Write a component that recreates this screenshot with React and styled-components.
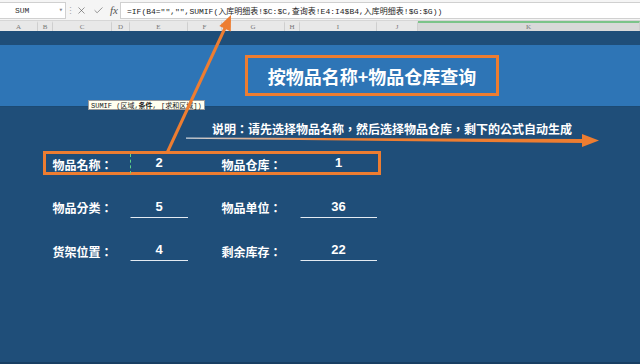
import React from 'react';
import styled, { createGlobalStyle } from 'styled-components';
import { X, Check } from 'lucide-react';

const GlobalStyle = createGlobalStyle`
    html, body { margin: 0; padding: 0; background: #1f4e79; }
    body { font-family: "Noto Sans CJK SC", "Noto Sans", sans-serif; }
`

const ORANGE = '#ed7d31';
const CJK = '"Noto Sans CJK SC", "Noto Sans", sans-serif';
// TC variant centres the full-width colon and comma, as in the sheet
const CJK_CENTERED = '"Noto Sans CJK TC", "Noto Sans CJK SC", sans-serif';
const MONO = '"Liberation Mono", "Noto Sans CJK SC", monospace';

const columns = [
    ['A', 38], ['B', 15], ['C', 59], ['D', 18], ['E', 58], ['F', 34],
    ['G', 63], ['H', 15], ['I', 77], ['J', 41], ['K', 222],
];

const rows = [
    { highlight: true, a: '物品名称：', av: '2', b: '物品仓库：', bv: '1' },
    { a: '物品分类：', av: '5', b: '物品单位：', bv: '36' },
    { a: '货架位置：', av: '4', b: '剩余库存：', bv: '22' },
];

function App() {
    return (
        <Page>
            <GlobalStyle />
            <FormulaBar>
                <NameBox>
                    <span>SUM</span>
                    <Caret>▾</Caret>
                </NameBox>
                <Grip>⋮</Grip>
                <BarIcons>
                    <X size={11} strokeWidth={1.3} color="#555" />
                    <Check size={11} strokeWidth={1.3} color="#555" />
                    <Fx>fx</Fx>
                </BarIcons>
                <FormulaInput>=IF(B4="","",SUMIF(入库明细表!$C:$C,查询表!E4:I4$B4,入库明细表!$G:$G))</FormulaInput>
            </FormulaBar>

            <ColumnHeader>
                {columns.map(([name, w]) => (
                    <ColCell key={name} width={w} selected={name === 'K'}>{name}</ColCell>
                ))}
            </ColumnHeader>

            <TopStrip />

            <Banner>
                <TitleBox>按物品名称+物品仓库查询</TitleBox>
            </Banner>

            <Sheet>
                <Note>说明：请先选择物品名称，然后选择物品仓库，剩下的公式自动生成</Note>
                <Rows>
                    {rows.map((r, i) => (
                        <Row key={i} highlight={r.highlight}>
                            <span />
                            <Label>{r.a}</Label>
                            <span />
                            <Value underline={!r.highlight} active={r.highlight}>{r.av}</Value>
                            <span />
                            <Label>{r.b}</Label>
                            <span />
                            <Value underline={!r.highlight}>{r.bv}</Value>
                        </Row>
                    ))}
                </Rows>
            </Sheet>

            <Tooltip>SUMIF (区域, <b>条件</b>, [求和区域])</Tooltip>

            <Arrows width="640" height="364" viewBox="0 0 640 364">
                <defs>
                    <linearGradient id="fade" x1="186" y1="0" x2="600" y2="0" gradientUnits="userSpaceOnUse">
                        <stop offset="0" stopColor="#cfd6de" />
                        <stop offset="0.35" stopColor={ORANGE} />
                        <stop offset="1" stopColor={ORANGE} />
                    </linearGradient>
                </defs>
                <line x1="167" y1="153" x2="225" y2="28" stroke={ORANGE} strokeWidth="3" />
                <polygon points="231,15 230.8,31.5 219.4,26" fill={ORANGE} />
                <polygon points="186,137.5 584,139 584,143 186,138.7" fill="url(#fade)" />
                <polygon points="599,140.5 582,134 582,147" fill={ORANGE} />
            </Arrows>
        </Page>
    );
}

export default App;

const Page = styled.div`
    position: relative;
    width: 640px;
    height: 364px;
    overflow: hidden;
    display: flex;
    flex-direction: column;
    background: #1f4e79;
`

const FormulaBar = styled.div`
    height: 21px;
    display: flex;
    align-items: center;
    background: #f5f5f5;
    border-bottom: 1px solid #d6d6d6;
    box-sizing: border-box;
`

const NameBox = styled.div`
    width: 66px;
    height: 17px;
    box-sizing: border-box;
    background: #ffffff;
    border: 1px solid #d0d0d0;
    border-left: none;
    display: flex;
    align-items: center;
    justify-content: space-between;
    padding: 0 2px 0 15px;
    font-family: ${MONO};
    font-size: 8px;
    color: #333;
`

const Caret = styled.span`
    font-size: 7px;
    color: #888;
`

const Grip = styled.span`
    width: 8px;
    text-align: center;
    font-size: 9px;
    color: #aaa;
`

const BarIcons = styled.div`
    display: flex;
    align-items: center;
    gap: 6px;
    padding-left: 2px;
    width: 44px;
`

const Fx = styled.span`
    font-family: "Liberation Serif", serif;
    font-style: italic;
    font-size: 11px;
    color: #555;
`

const FormulaInput = styled.div`
    flex: 1;
    height: 17px;
    box-sizing: border-box;
    background: #ffffff;
    border: 1px solid #d0d0d0;
    border-right: none;
    padding-left: 6px;
    display: flex;
    align-items: center;
    white-space: nowrap;
    font-family: ${MONO};
    font-size: 8px;
    color: #222;
`

const ColumnHeader = styled.div`
    height: 10px;
    display: flex;
    background: #e8e8e8;
`

const ColCell = styled.div`
    width: ${p => p.width}px;
    flex: none;
    box-sizing: border-box;
    border-right: 1px solid #cfcfcf;
    border-top: 2px solid ${p => (p.selected ? '#7cc48a' : 'transparent')};
    background: ${p => (p.selected ? '#d9d9d9' : 'transparent')};
    font-family: "Liberation Serif", serif;
    font-size: 7px;
    line-height: 8px;
    color: #777;
    text-align: center;
`

const TopStrip = styled.div`
    height: 14px;
    background: #1f4e79;
`

const Banner = styled.div`
    height: 62px;
    background: #2e75b6;
    border-bottom: 1px solid #1c4a73;
    box-sizing: border-box;
    display: flex;
    align-items: center;
    padding-left: 245px;
`

const TitleBox = styled.div`
    width: 254px;
    height: 41px;
    box-sizing: border-box;
    border: 3.5px solid ${ORANGE};
    display: flex;
    align-items: center;
    justify-content: center;
    font-family: ${CJK};
    font-weight: 700;
    font-size: 18px;
    color: #ffffff;
`

const Sheet = styled.div`
    flex: 1;
    background: #1f4e79;
    border-bottom: 2px solid #183f63;
    padding-top: 14px;
`

const Note = styled.div`
    padding-left: 212px;
    height: 16px;
    line-height: 16px;
    font-family: ${CJK_CENTERED};
    font-weight: 700;
    font-size: 12px;
    color: #ffffff;
    white-space: nowrap;
`

const Rows = styled.div`
    margin-top: 14px;
    display: flex;
    flex-direction: column;
    gap: 19.5px;
`

const Row = styled.div`
    margin-left: 43px;
    width: 338px;
    height: 24px;
    box-sizing: border-box;
    border: 3.5px solid ${p => (p.highlight ? ORANGE : 'transparent')};
    display: grid;
    grid-template-columns: 6.5px 59px 18px 58px 34px 63px 15px 77px;
    align-items: center;
`

const Label = styled.div`
    font-family: ${CJK_CENTERED};
    font-weight: 700;
    font-size: 12px;
    color: #ffffff;
    white-space: nowrap;
`

const Value = styled.div`
    height: 20px;
    box-sizing: border-box;
    line-height: 18px;
    text-align: center;
    font-family: "Liberation Sans", "Noto Sans", sans-serif;
    font-weight: 700;
    font-size: 13px;
    color: #ffffff;
    border-bottom: 1.5px solid ${p => (p.underline ? '#e4ebf2' : 'transparent')};
    border-left: 1px dashed ${p => (p.active ? '#5fd38a' : 'transparent')};
`

const Tooltip = styled.div`
    position: absolute;
    left: 88px;
    top: 100px;
    height: 10px;
    padding: 0 2px;
    box-sizing: border-box;
    background: #fffff0;
    border: 1px solid #9a9a9a;
    display: flex;
    align-items: center;
    font-family: ${MONO};
    font-size: 7px;
    color: #222;
    white-space: nowrap;

    b { font-weight: 700; }
`

const Arrows = styled.svg`
    position: absolute;
    left: 0;
    top: 0;
    pointer-events: none;
`
